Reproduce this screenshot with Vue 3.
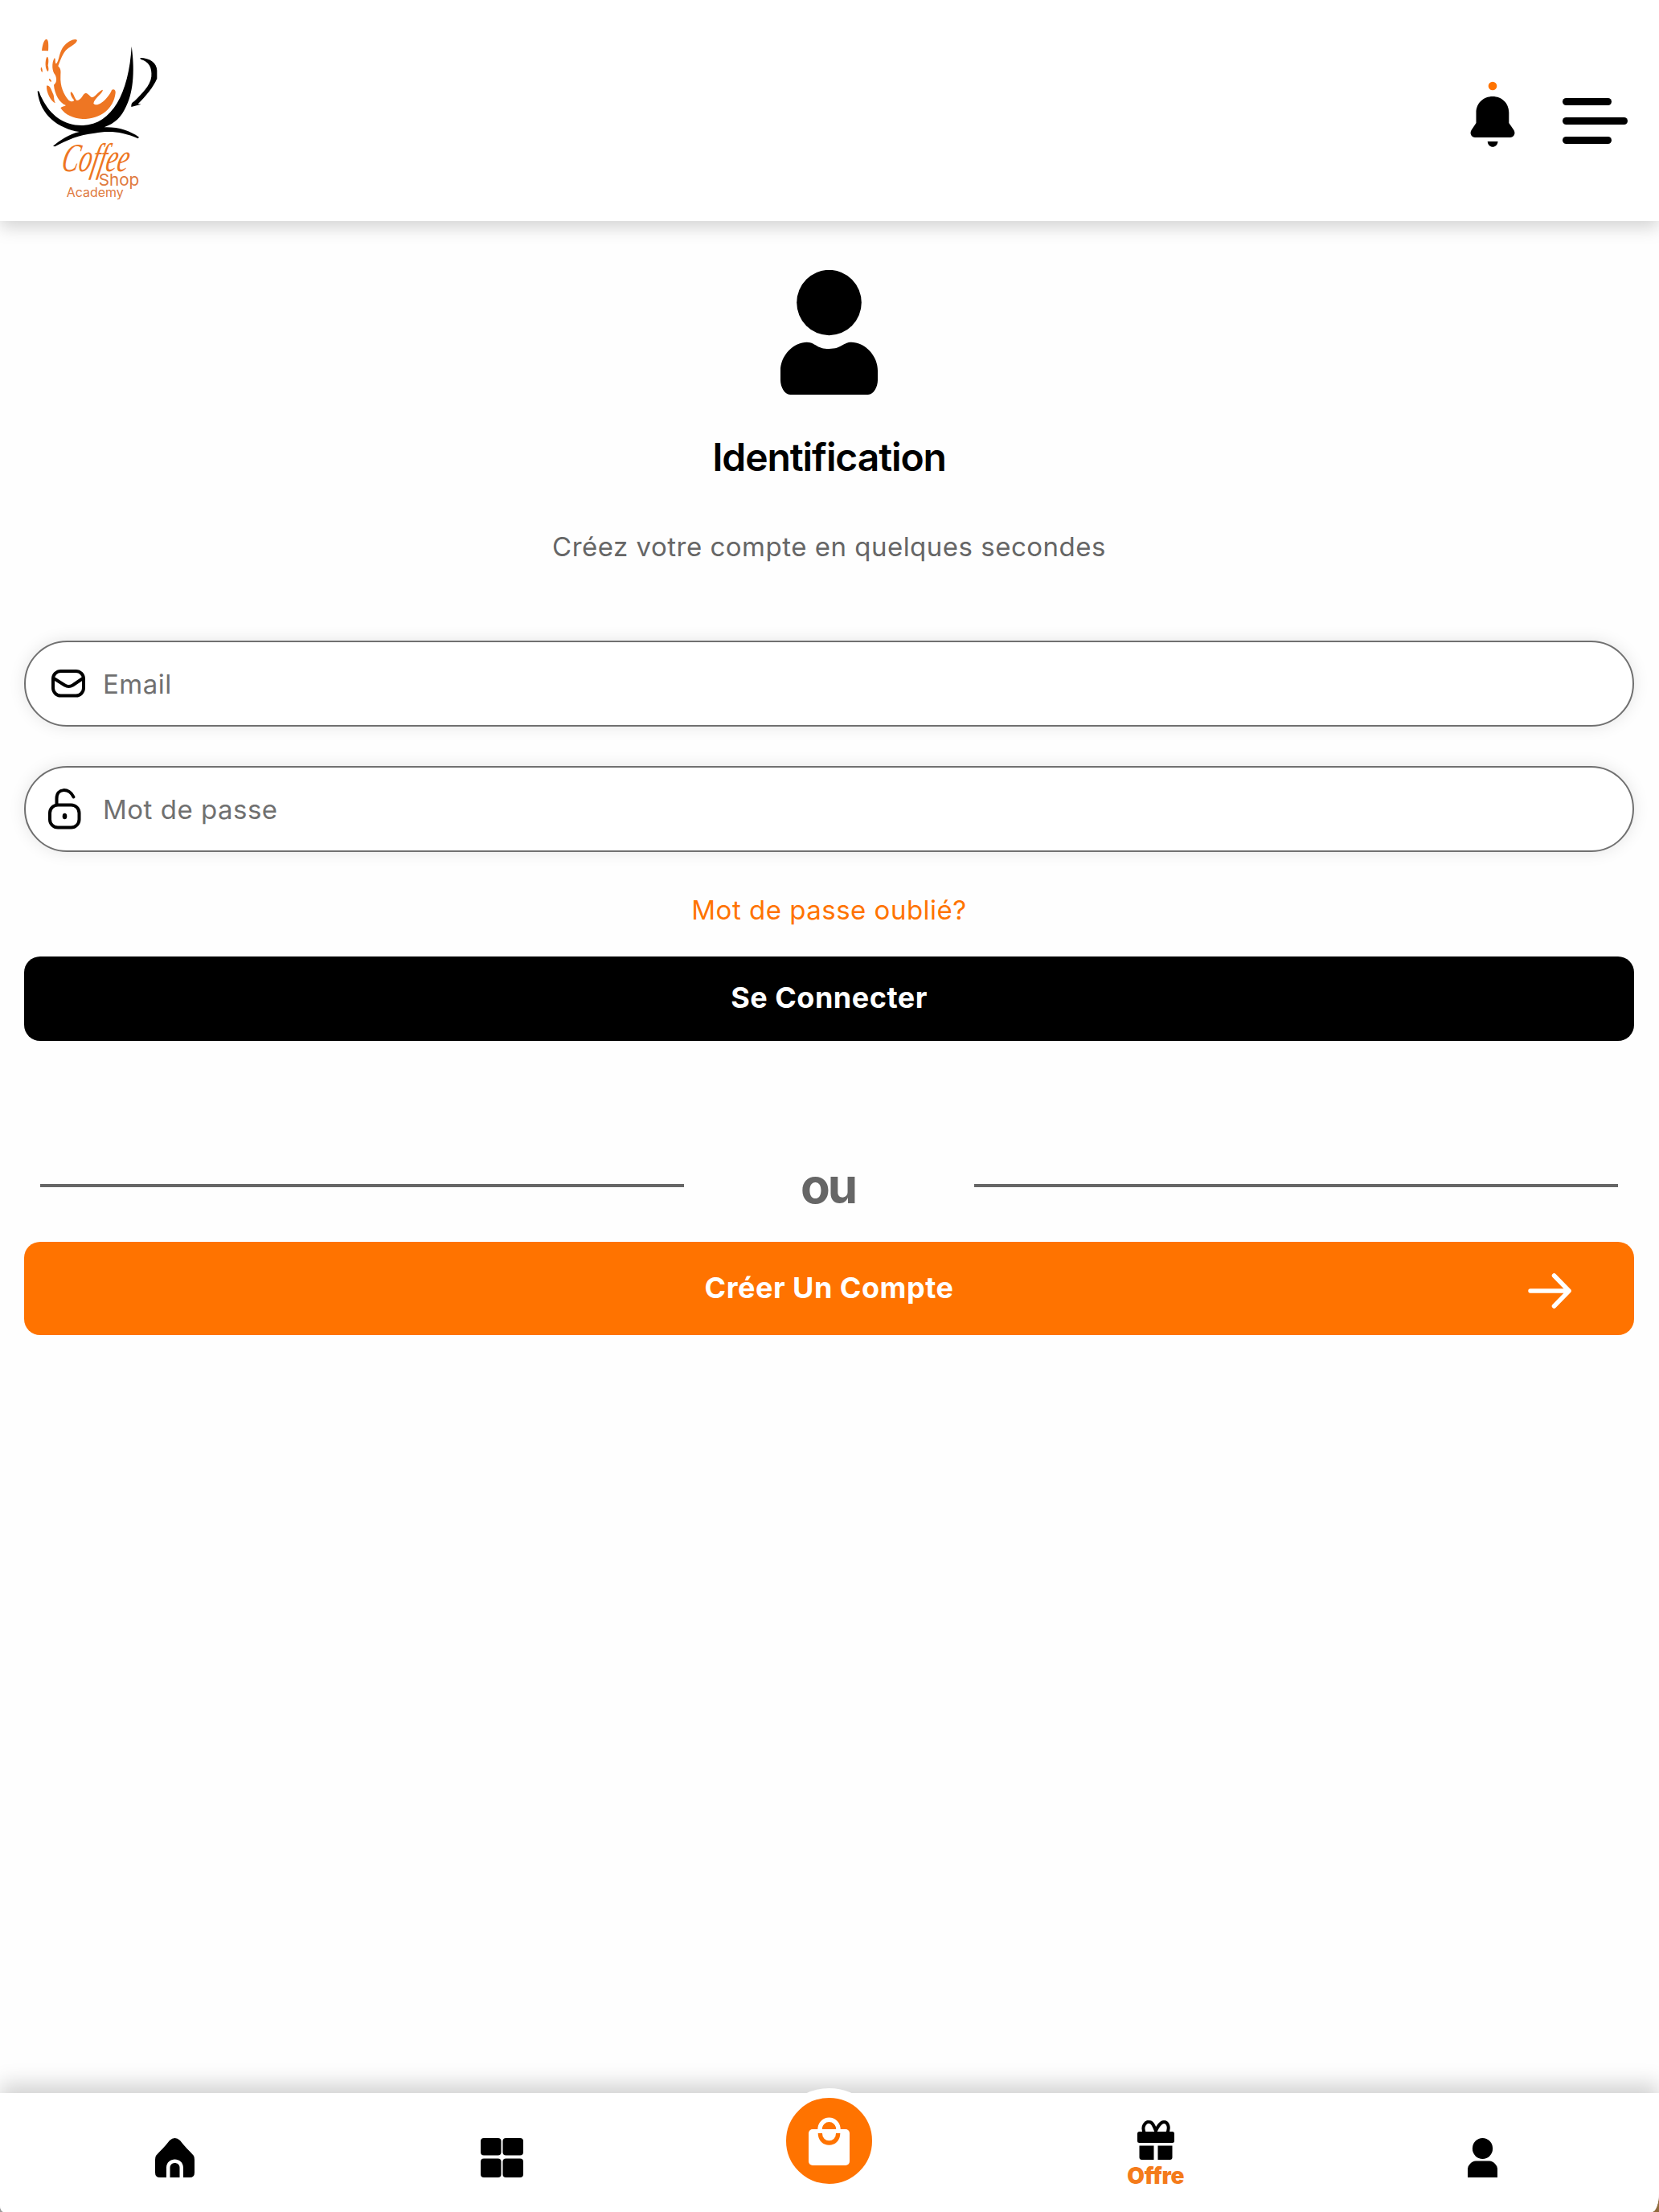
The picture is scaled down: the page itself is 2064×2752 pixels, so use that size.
<template>
  <div class="page">
    <header class="header">
      <svg class="logo" viewBox="0 0 660 810" role="img" aria-label="Coffee Shop Academy">
        <g fill="#ee7623">
          <path d="M96 129 C98 108 104 88 113 86 C122 86 121 112 120 130 Z" />
          <path d="M228 90 C224 108 197 113 184 130 C169 151 164 170 157 187 C168 197 167 207 166 223 C164 262 177 292 197 315 C209 322 216 319 216 313 C208 305 201 292 204 283 C213 282 218 309 227 315 C247 312 247 290 260 287 C273 290 278 306 287 303 C300 295 311 278 324 275 C322 290 291 307 289 326 C306 345 347 303 357 276 C364 270 373 276 371 287 C364 345 317 384 248 384 C213 382 183 369 166 343 C170 337 180 338 186 333 C163 325 143 291 141 257 C150 250 154 237 146 220 C134 207 132 176 143 157 C149 158 144 173 149 178 C162 170 159 131 182 108 C197 92 220 82 228 90 Z" />
          <path d="M115 152 C122 153 122 169 119 184 C121 194 123 202 119 207 C108 199 107 167 115 152 Z" />
          <path d="M93 190 Q100 197 98 210 Q90 205 93 190 Z" />
          <path d="M123 233 Q131 235 132 245 Q122 244 123 233 Z" />
          <path d="M114 260 C127 257 132 277 137 288 C144 300 139 311 147 325 C130 318 112 284 114 260 Z" />
        </g>
        <path d="M80 281 C87 276 88 292 95 304 C129 375 183 410 250 408 C358 403 421 288 431 113 C442 190 441 276 411 337 C393 378 368 401 329 415 C379 413 424 427 459 452 L455 457 C398 430 343 427 293 437 C235 443 188 463 145 487 L138 485 C164 463 198 441 236 432 C158 419 90 371 80 281 Z" />
        <path d="M463 156 C500 156 526 176 526 203 L526 233 C513 265 483 299 455 328 L467 329 L430 339 C429 329 432 323 441 318 C470 290 501 260 505 226 C508 190 495 170 465 161 Z" />
        <text class="logo-script" transform="translate(164 578) skewX(-12)" textLength="250" lengthAdjust="spacingAndGlyphs" font-size="150">Coffee</text>
        <text class="logo-text" x="308" y="632" textLength="152" lengthAdjust="spacingAndGlyphs" font-size="62">Shop</text>
        <text class="logo-text" x="188" y="674" textLength="213" lengthAdjust="spacingAndGlyphs" font-size="46">Academy</text>
      </svg>
      <div class="actions">
        <button class="icon-btn" aria-label="Notifications">
          <svg width="56" height="84" viewBox="0 0 56 84">
            <circle cx="28" cy="6" r="5.3" fill="#ff7300" />
            <path d="M28 19 C39.5 19 48.3 27.5 48.3 39 V52 L54.5 61 C57 65.5 54 70 50 70 H6 C2 70 -1 65.5 1.500 61 L7.500 52 V39 C7.500 27.500 16.500 19 28 19 Z" />
            <path d="M21.700 75 H34.500 C34 84 22.200 84 21.700 75 Z" />
          </svg>
        </button>
        <button class="icon-btn menu-btn" aria-label="Menu">
          <span class="bar short"></span>
          <span class="bar"></span>
          <span class="bar short"></span>
        </button>
      </div>
    </header>

    <main class="content">
      <svg class="avatar" viewBox="0 0 121 155">
        <ellipse cx="60.500" cy="40.500" rx="40.300" ry="40.700" />
        <path d="M27 90.500 C43 87 42 98 60.500 98 C79 98 78 87 94 90.500 C109 94 121 109 121 125 V137 C121 145 116 155 109 155 H12 C5 155 0 145 0 137 V125 C0 109 12 94 27 90.500 Z" />
      </svg>
      <h1 class="title">Identification</h1>
      <p class="subtitle">Créez votre compte en quelques secondes</p>

      <form class="form" @submit.prevent>
        <label class="field">
          <svg class="field-icon" viewBox="0 0 46 56">
            <rect x="6" y="12" width="38" height="30.500" rx="9.500" />
            <path d="M7 21 L20.500 29.500 Q25.500 32.500 30.500 29.500 L43 21" />
          </svg>
          <input v-model="email" type="email" placeholder="Email" />
        </label>
        <label class="field">
          <svg class="field-icon" viewBox="0 0 46 56">
            <rect x="2" y="22.500" width="36.500" height="28" rx="10" />
            <path d="M10.500 22 V14.500 C10.500 1 26 1 31.500 12.500" />
            <ellipse class="dot" cx="20.500" cy="36.500" rx="2.800" ry="3.700" />
          </svg>
          <input v-model="password" type="password" placeholder="Mot de passe" />
        </label>
        <a class="forgot" href="#">Mot de passe oublié?</a>
        <button class="btn login" type="submit">Se Connecter</button>
      </form>

      <div class="divider"><span class="or">ou</span></div>

      <button class="btn signup">
        <span class="signup-label">Créer Un Compte</span>
        <svg class="arrow" viewBox="0 0 54 44">
          <path d="M3 22 H51 M32.500 3 L51 22 L32.500 41" />
        </svg>
      </button>
    </main>

    <nav class="tabs">
      <a class="tab" href="#" aria-label="Accueil">
        <svg width="49" height="49" viewBox="0 0 49 49">
          <path d="M18 3 Q24.500 -3 31 3 C36 10 43 16 48 22 Q49 24 49 27 V43 Q49 49 43 49 H35 V37 C35 23 14 23 14 37 V49 H6 Q0 49 0 43 V27 Q0 24 1 22 C6 16 13 10 18 3 Z" />
          <path d="M18.500 49 V37 C18.500 29 30.500 29 30.500 37 V49 Z" />
        </svg>
      </a>
      <a class="tab" href="#" aria-label="Catégories">
        <svg width="53" height="49" viewBox="0 0 53 49">
          <rect width="25.500" height="21.500" rx="4" />
          <rect x="27.500" width="25.500" height="21.500" rx="4" />
          <rect y="25.500" width="25.500" height="23.500" rx="4" />
          <rect x="27.500" y="25.500" width="25.500" height="23.500" rx="4" />
        </svg>
      </a>
      <a class="tab cart" href="#" aria-label="Panier">
        <span class="cart-circle">
          <svg width="51" height="60" viewBox="0 0 51 60">
            <rect y="15" width="51" height="45" rx="5" fill="#fff" />
            <path d="M14 16 C14 -1 37 -1 37 16" fill="none" stroke="#fff" stroke-width="5.500" />
            <path d="M17 15 C18 4 33 4 34 15 Z" fill="#ff7300" />
            <path d="M14.300 20 C14.300 36 36.700 36 36.700 20" fill="none" stroke="#ff7300" stroke-width="5.300" />
          </svg>
        </span>
      </a>
      <a class="tab offer" href="#">
        <svg width="46" height="49" viewBox="0 0 46 49">
          <path d="M9.500 17 C4 7 11 1 15 2 C19 2 21 8 23 13 C25 8 29 2 33 2 C38 2 41 9 36.500 17" fill="none" stroke="#000" stroke-width="4" />
          <rect y="14" width="46" height="14" rx="2.500" />
          <path d="M2.500 31.500 H20.500 V49 H5.500 Q2.500 49 2.500 46 Z M25.500 31.500 H43.500 V46 Q43.500 49 40.500 49 H25.500 Z" />
        </svg>
        <span class="offer-label">Offre</span>
      </a>
      <a class="tab" href="#" aria-label="Profil">
        <svg width="37" height="49" viewBox="0 0 37 49">
          <ellipse cx="18.500" cy="13" rx="12.600" ry="13" />
          <path d="M10 28.500 H27 Q31 28.500 34 32 Q37 35 37 38 V49 H0 V38 Q0 35 3 32 Q6 28.500 10 28.500 Z" />
        </svg>
      </a>
    </nav>
  </div>
</template>

<script setup>
import { ref } from 'vue'

const email = ref('')
const password = ref('')
</script>

<style>
body {
  background: linear-gradient(90deg, #9a9a9a, #8f6b3c);
}
</style>

<style scoped>
.page {
  display: flex;
  flex-direction: column;
  min-height: 100vh;
  overflow: hidden;
  border-radius: 0 0 9px 5px / 0 0 24px 8px;
  background: #fefefe;
  font-family: Inter, sans-serif;
  color: #000;
}

button {
  font-family: inherit;
  border: none;
  padding: 0;
}

.header {
  display: flex;
  justify-content: space-between;
  box-sizing: border-box;
  height: 275px;
  padding: 0 39px 0 20px;
  background: #fff;
  box-shadow: 0 8px 20px rgba(0, 0, 0, 0.17);
}

.logo {
  width: 220px;
  height: 270px;
  margin-top: 20px;
}

.logo-script {
  font-family: 'Liberation Serif', serif;
  font-style: italic;
  fill: #ee7623;
}

.logo-text {
  font-family: Inter, sans-serif;
  font-weight: 400;
  fill: #e07a3e;
}

.actions {
  display: flex;
  align-items: flex-start;
  gap: 59px;
  padding-top: 101px;
}

.icon-btn {
  display: flex;
  background: none;
}

.menu-btn {
  flex-direction: column;
  gap: 15px;
  width: 81px;
  margin-top: 21px;
}

.bar {
  width: 81px;
  height: 9px;
  border-radius: 5px;
  background: #000;
}

.bar.short {
  width: 61px;
}

.content {
  display: flex;
  flex: 1;
  flex-direction: column;
  align-items: center;
  padding: 61px 31px 0 30px;
}

.avatar {
  width: 121px;
  height: 155px;
}

.title {
  margin: 48px 0 0;
  font-size: 48px;
  font-weight: 600;
  line-height: 60px;
  letter-spacing: -1.1px;
}

.subtitle {
  margin: 57px 0 93px;
  font-size: 33px;
  line-height: 48px;
  letter-spacing: 0.5px;
  color: #666;
}

.form {
  display: flex;
  flex-direction: column;
  align-items: center;
  width: 100%;
}

.field {
  display: flex;
  align-items: center;
  box-sizing: border-box;
  width: 100%;
  height: 107px;
  margin-bottom: 49px;
  padding-left: 28px;
  border: 2px solid #707070;
  border-radius: 54px;
  background: #fff;
  box-shadow: 0 0 20px rgba(0, 0, 0, 0.1);
}

.field + .field {
  margin-bottom: 48px;
}

.field-icon {
  width: 46px;
  height: 56px;
  fill: none;
  stroke: #000;
  stroke-width: 4;
  stroke-linecap: round;
}

.field-icon .dot {
  fill: #000;
  stroke: none;
}

.field input {
  flex: 1;
  margin-left: 22px;
  padding: 0;
  border: none;
  outline: none;
  background: none;
  font-family: inherit;
  font-size: 33px;
  letter-spacing: 0.5px;
}

.field input::placeholder {
  color: #707070;
  opacity: 1;
}

.forgot {
  font-size: 33px;
  line-height: 48px;
  letter-spacing: 0.5px;
  color: #ff7300;
  text-decoration: none;
}

.btn {
  width: 100%;
  border-radius: 20px;
  color: #fff;
  font-size: 36px;
  font-weight: 700;
  letter-spacing: 0.5px;
}

.login {
  height: 105px;
  margin-top: 34px;
  padding-bottom: 3px;
  background: #000;
}

.divider {
  display: flex;
  align-items: center;
  box-sizing: border-box;
  width: 100%;
  margin: 150px 0 40px;
  padding: 0 20px;
}

.divider::before,
.divider::after {
  content: '';
  flex: 1;
  height: 4px;
  background: #666;
}

.or {
  box-sizing: border-box;
  width: 361px;
  padding-right: 3px;
  text-align: center;
  font-size: 60px;
  font-weight: 700;
  line-height: 60px;
  letter-spacing: -3px;
  color: #666;
}

.signup {
  display: grid;
  grid-template-columns: 1fr auto 1fr;
  align-items: center;
  height: 116px;
  background: #ff7300;
}

.signup-label {
  grid-column: 2;
  padding-bottom: 3px;
}

.arrow {
  justify-self: end;
  width: 54px;
  height: 44px;
  margin: 6px 78px 0 0;
  fill: none;
  stroke: #fff;
  stroke-width: 5.5;
  stroke-linecap: round;
  stroke-linejoin: round;
}

.tabs {
  display: grid;
  grid-template-columns: repeat(5, 1fr);
  height: 148px;
  padding: 0 16px 0 14px;
  background: #fff;
  box-shadow: 0 -12px 24px rgba(0, 0, 0, 0.17);
}

.tab {
  display: flex;
  flex-direction: column;
  align-items: center;
  padding-top: 56px;
  text-decoration: none;
}

.tab.cart {
  padding-top: 0;
}

.cart-circle {
  display: flex;
  align-items: center;
  justify-content: center;
  width: 107px;
  height: 107px;
  margin-top: -6px;
  margin-left: 1px;
  border: 12px solid #fff;
  border-radius: 50%;
  background: #ff7300;
}

.tab.offer {
  padding-top: 34px;
}

.offer-label {
  margin-top: 3px;
  font-size: 28px;
  font-weight: 900;
  line-height: 34px;
  letter-spacing: -0.3px;
  color: #f47b1b;
}
</style>
